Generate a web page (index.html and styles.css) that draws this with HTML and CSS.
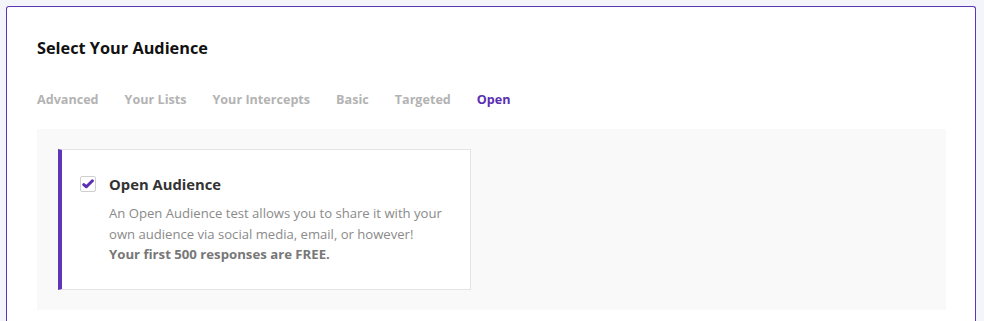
FILE: index.html
```html
<!DOCTYPE html>
<html lang="en">
<head>
    <meta charset="UTF-8">
    <meta name="viewport" content="width=device-width, initial-scale=1.0">
    <title>Select Your Audience</title>
    <link rel="stylesheet" href="styles.css">
</head>
<body>
    <div class="audience-card">
        <h2 class="card-title">Select Your Audience</h2>

        <div class="tabs">
            <span class="tab">Advanced</span>
            <span class="tab">Your Lists</span>
            <span class="tab">Your Intercepts</span>
            <span class="tab">Basic</span>
            <span class="tab">Targeted</span>
            <span class="tab active">Open</span>
        </div>

        <div class="tab-panel">
            <div class="option">
                <span class="checkbox">
                    <svg width="12" height="10" viewBox="0 0 12 10">
                        <path d="M1.8 5.6 L4.4 7.8 L10.4 1.8" fill="none" stroke="#5a2fb0" stroke-width="3" stroke-linecap="round" stroke-linejoin="round"/>
                    </svg>
                </span>
                <div class="option-body">
                    <div class="option-title">Open Audience</div>
                    <p class="option-text">An Open Audience test allows you to share it with your<br>own audience via social media, email, or however!<br><strong>Your first 500 responses are FREE.</strong></p>
                </div>
            </div>
        </div>
    </div>
</body>
</html>
```

FILE: styles.css
```css
* {
    box-sizing: border-box;
}

body {
    font-family: "Open Sans", Lato, Arial, sans-serif;
    margin: 0;
    padding: 6px 8px 0 6px;
    background: #f4f5fa;
    height: 100vh;
    display: flex;
    flex-direction: column;
    overflow: hidden;
}

.audience-card {
    flex: 1;
    background: #fff;
    border: 1px solid #5f35b8;
    border-bottom: none;
    border-radius: 3px 3px 0 0;
    padding: 30px 29px 0 30px;
}

.card-title {
    margin: 0;
    font-size: 16.3px;
    font-weight: 700;
    color: #111;
    line-height: 22px;
}

.tabs {
    display: flex;
    gap: 26px;
    margin-top: 32px;
    height: 34px;
    align-items: flex-start;
}

.tab {
    font-size: 12.6px;
    font-weight: 700;
    color: #b3b3b3;
    line-height: 18px;
}

.tab.active {
    color: #5a2fb0;
}

.tab-panel {
    margin-top: 4px;
    background: #f9f9f9;
    padding: 20px 21px;
    height: 181px;
}

.option {
    width: 413px;
    height: 141px;
    background: #fff;
    border: 1px solid #e4e4e4;
    border-left: 4px solid #5f35b8;
    padding: 25px 10px 0 18px;
    display: flex;
    gap: 13px;
}

.checkbox {
    flex: none;
    width: 16px;
    height: 16px;
    border: 1px solid #cfcfcf;
    border-radius: 2px;
    display: flex;
    align-items: center;
    justify-content: center;
    margin-top: 1px;
}

.option-title {
    font-size: 14.8px;
    font-weight: 700;
    color: #333;
    line-height: 18px;
}

.option-text {
    margin: 10px 0 0;
    font-size: 13.1px;
    line-height: 20.5px;
    color: #8a8a8a;
}

.option-text strong {
    color: #777;
    font-size: 13.2px;
}
```
